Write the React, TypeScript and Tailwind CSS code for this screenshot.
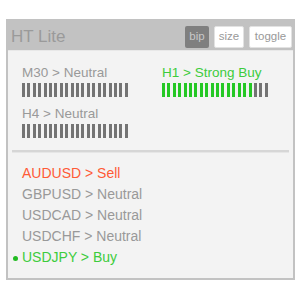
import React from "react";

const Bar = ({ green = 0 }: { green?: number }) => (
  <div className="flex w-[106px] h-[14px] justify-between">
    {Array.from({ length: 20 }).map((_, i) => (
      <div
        key={i}
        className={
          i < green
            ? "w-[3px] h-full bg-[#26c826]"
            : "w-[3px] h-full bg-[#747474]"
        }
      />
    ))}
  </div>
);

export default function App() {
  return (
    <div className="w-[300px] h-[300px] bg-white pt-[19px] pl-[6px]" style={{ fontFamily: '"Liberation Sans", Arial, sans-serif' }}>
      <div className="w-[289px] h-[261px] border-2 border-[#c2c2c2] bg-[#f3f3f3] flex flex-col">
        <div className="h-[29px] bg-[#c2c2c2] flex items-center justify-between pl-[3px] pr-[1px]">
          <span className="text-[17px] text-[#9a9a9a] leading-none mt-[2px]">HT Lite</span>
          <div className="flex items-center gap-[5px] mt-[2px]">
            <div className="w-[24px] h-[22px] rounded-[2px] bg-[#7f7f7f] text-[#c8c8c8] text-[11.5px] flex items-center justify-center">bip</div>
            <div className="w-[30px] h-[22px] rounded-[2px] bg-white border border-[#e2e2e2] text-[#999999] text-[11.5px] flex items-center justify-center">size</div>
            <div className="w-[43px] h-[22px] rounded-[2px] bg-white border border-[#e2e2e2] text-[#999999] text-[11.5px] flex items-center justify-center">toggle</div>
          </div>
        </div>
        <div className="flex flex-col pt-[14px] border-t border-[#e8e8e8]">
          <div className="flex pl-[14px]">
            <div className="w-[140px] flex flex-col">
              <div className="text-[13.5px] leading-[16px] text-[#999999]">M30 &gt; Neutral</div>
              <div className="mt-[2px]"><Bar /></div>
              <div className="text-[13.5px] leading-[16px] text-[#999999] mt-[9px]">H4 &gt; Neutral</div>
              <div className="mt-[2px]"><Bar /></div>
            </div>
            <div className="flex flex-col">
              <div className="text-[13.5px] leading-[16px] text-[#3ccc3c]">H1 &gt; Strong Buy</div>
              <div className="mt-[2px]"><Bar green={17} /></div>
            </div>
          </div>
          <div className="mx-[4px] mt-[12px] h-[3px] bg-[#d6d6d6] border-b border-[#e6e6e6]" />
          <div className="flex flex-col pl-[14px] pt-[10px]">
            <div className="text-[14px] leading-[21px] text-[#ff5a36]">AUDUSD &gt; Sell</div>
            <div className="text-[14px] leading-[21px] text-[#999999]">GBPUSD &gt; Neutral</div>
            <div className="text-[14px] leading-[21px] text-[#999999]">USDCAD &gt; Neutral</div>
            <div className="text-[14px] leading-[21px] text-[#999999]">USDCHF &gt; Neutral</div>
            <div className="relative text-[14px] leading-[21px] text-[#3ccc3c]">
              <span className="absolute left-[-9px] top-[9px] w-[5px] h-[5px] rounded-full bg-[#22bb22]" />
              USDJPY &gt; Buy
            </div>
          </div>
        </div>
      </div>
    </div>
  );
}
